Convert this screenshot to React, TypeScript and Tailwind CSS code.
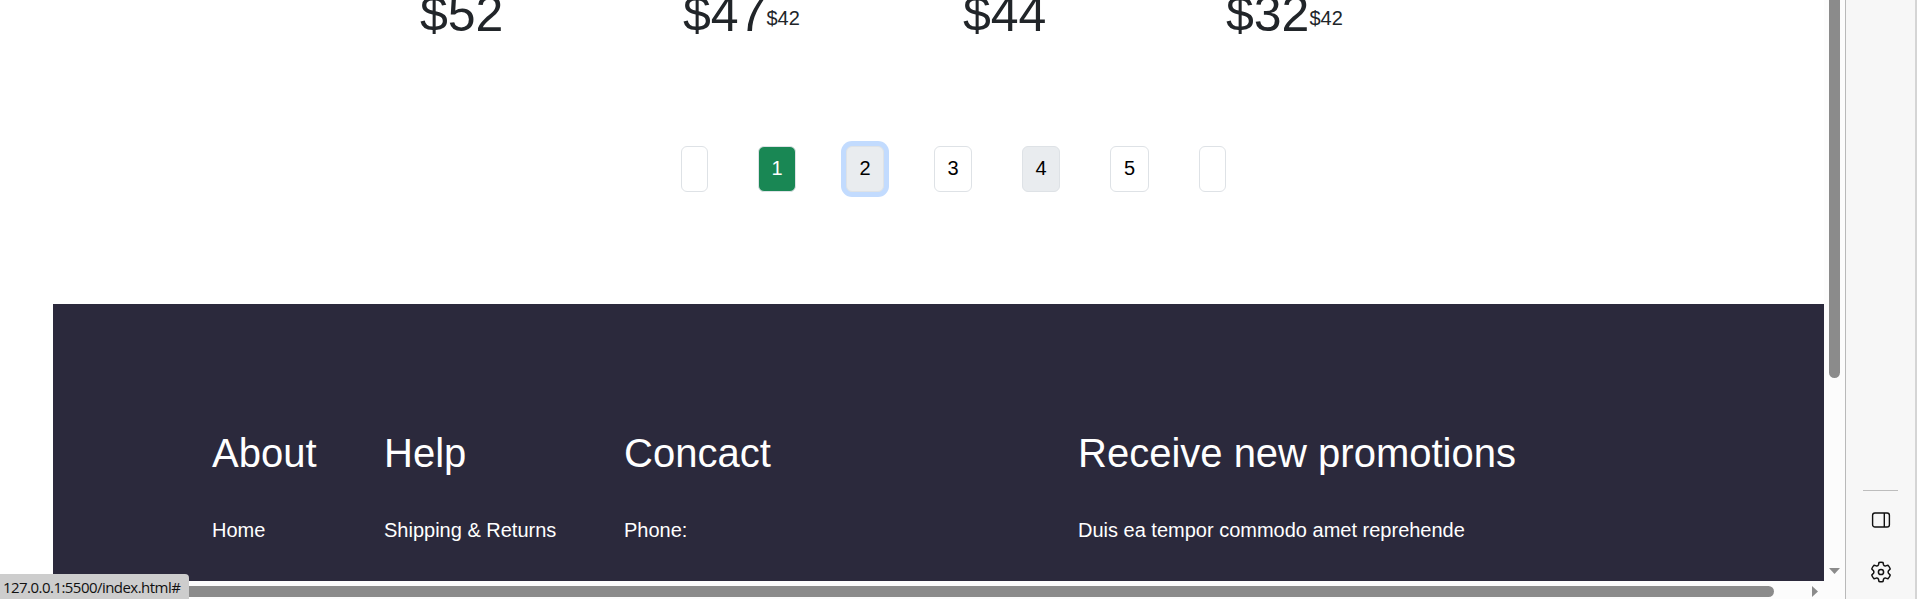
type Price = { now: string; old?: string; cell: string };

const prices: Price[] = [
  { now: "$52", cell: "w-[263px]" },
  { now: "$47", old: "$42", cell: "w-[280px]" },
  { now: "$44", cell: "w-[263px]" },
  { now: "$32", old: "$42", cell: "w-[280px]" },
];

const pages = [
  { label: "", style: "w-[27px] border-[#dee2e6] bg-white" },
  { label: "1", style: "w-[38px] border-[#dee2e6] bg-[#198754] text-white" },
  { label: "2", style: "w-[38px] border-[#dee2e6] bg-[#e9ecef] text-black shadow-[0_0_0_5px_#c2dbfe]" },
  { label: "3", style: "w-[38px] border-[#dee2e6] bg-white text-black" },
  { label: "4", style: "w-[38px] border-[#dee2e6] bg-[#e9ecef] text-black" },
  { label: "5", style: "w-[39px] border-[#dee2e6] bg-white text-black" },
  { label: "", style: "w-[27px] border-[#dee2e6] bg-white" },
];

const columns = [
  { title: "About", text: "Home", cell: "w-[172px]" },
  { title: "Help", text: "Shipping & Returns", cell: "w-[240px]" },
  { title: "Concact", text: "Phone:", cell: "w-[454px]" },
  { title: "Receive new promotions", text: "Duis ea tempor commodo amet reprehende", cell: "w-[500px]" },
];

function Prices() {
  return (
    <div className="flex h-[146px] shrink-0 pl-[420px]">
      {prices.map((p) => (
        <div key={p.now} className={`-mt-4 flex h-[60px] shrink-0 items-start text-[#212529] ${p.cell}`}>
          <span className="text-[50px] leading-[60px]">{p.now}</span>
          {p.old && <span className="mt-[19px] text-xl leading-[30px]">{p.old}</span>}
        </div>
      ))}
    </div>
  );
}

function Pagination() {
  return (
    <nav className="flex h-[158px] shrink-0 items-start gap-[50px] pl-[681px]">
      {pages.map((p, i) => (
        <a key={i} className={`flex h-[46px] shrink-0 items-center justify-center rounded-[6px] border pb-[3px] text-xl ${p.style}`}>
          {p.label}
        </a>
      ))}
    </nav>
  );
}

function Footer() {
  return (
    <footer className="ml-[53px] flex h-[277px] shrink-0 bg-[#2b293c] pt-[125px] pl-[159px] text-white">
      {columns.map((c) => (
        <div key={c.title} className={`shrink-0 whitespace-nowrap ${c.cell}`}>
          <h2 className="text-[40px] leading-[48px]">{c.title}</h2>
          <p className="mt-[38px] text-xl leading-[30px]">{c.text}</p>
        </div>
      ))}
    </footer>
  );
}

function SideRail() {
  return (
    <aside className="flex w-[72px] shrink-0 flex-col items-center border-r-2 border-l border-r-[#d5d5d5] border-l-[#b9b9b9] bg-[#f7f7f7] pt-[490px]">
      <div className="h-px w-[35px] shrink-0 bg-[#bdbdbd]" />
      <svg className="mt-[19px] shrink-0" width="20" height="20" viewBox="0 0 20 20" fill="none" stroke="#111" strokeWidth="1.4">
        <rect x="1.6" y="3" width="16.8" height="14" rx="2.3" />
        <path d="M13.3 3v14" />
      </svg>
      <svg className="mt-[31px] shrink-0" width="22" height="22" viewBox="0 0 22 22" fill="none" stroke="#111" strokeWidth="1.5" strokeLinejoin="round">
        <path d="M9 1.5Q11 1 13 1.5L13.5 3.7Q14 5.2 15.6 4.9L18 4.2Q19.6 5.8 20.2 7.9L18.5 9.7Q17.6 11 18.5 12.3L20.2 14.1Q19.6 16.2 18 17.8L15.6 17.1Q14 16.8 13.5 18.3L13 20.5Q11 21 9 20.5L8.5 18.3Q8 16.8 6.4 17.1L4 17.8Q2.4 16.2 1.8 14.1L3.5 12.3Q4.4 11 3.5 9.7L1.8 7.9Q2.4 5.8 4 4.2L6.4 4.9Q8 5.2 8.5 3.7Z" />
        <circle cx="11" cy="11" r="2.6" />
      </svg>
    </aside>
  );
}

export default function App() {
  return (
    <div className="relative flex h-[599px] w-[1917px] overflow-hidden bg-white font-['Liberation_Sans',Arial,sans-serif]">
      <div className="flex w-[1845px] shrink-0 flex-col">
        <div className="flex h-[581px] shrink-0">
          <main className="flex w-[1824px] shrink-0 flex-col">
            <Prices />
            <Pagination />
            <Footer />
          </main>
          <div className="flex w-[21px] shrink-0 flex-col items-center bg-[#fcfcfc]">
            <div className="h-[378px] w-[11px] rounded-b-full bg-[#8b8b8b]" />
            <svg className="mt-[190px]" width="11" height="6" viewBox="0 0 11 6" fill="#8b8b8b">
              <path d="M0 0h11L5.5 6z" />
            </svg>
          </div>
        </div>
        <div className="flex h-[18px] shrink-0 items-start bg-[#fcfcfc] pt-[5px]">
          <div className="h-[11px] w-[1774px] rounded-r-full bg-[#8b8b8b]" />
          <svg className="ml-[38px]" width="6" height="11" viewBox="0 0 6 11" fill="#8b8b8b">
            <path d="M0 0v11l6-5.5z" />
          </svg>
        </div>
      </div>
      <SideRail />
      <div className="absolute bottom-0 left-0 flex h-[25px] w-[189px] items-center rounded-tr-[4px] bg-[#cdcdcd] pl-[3px] font-['Open_Sans','Noto_Sans',sans-serif] text-[15px] tracking-[-0.54px] whitespace-nowrap text-[#111]">
        <span className="mt-[2px]">127.0.0.1:5500/index.html#</span>
      </div>
    </div>
  );
}
